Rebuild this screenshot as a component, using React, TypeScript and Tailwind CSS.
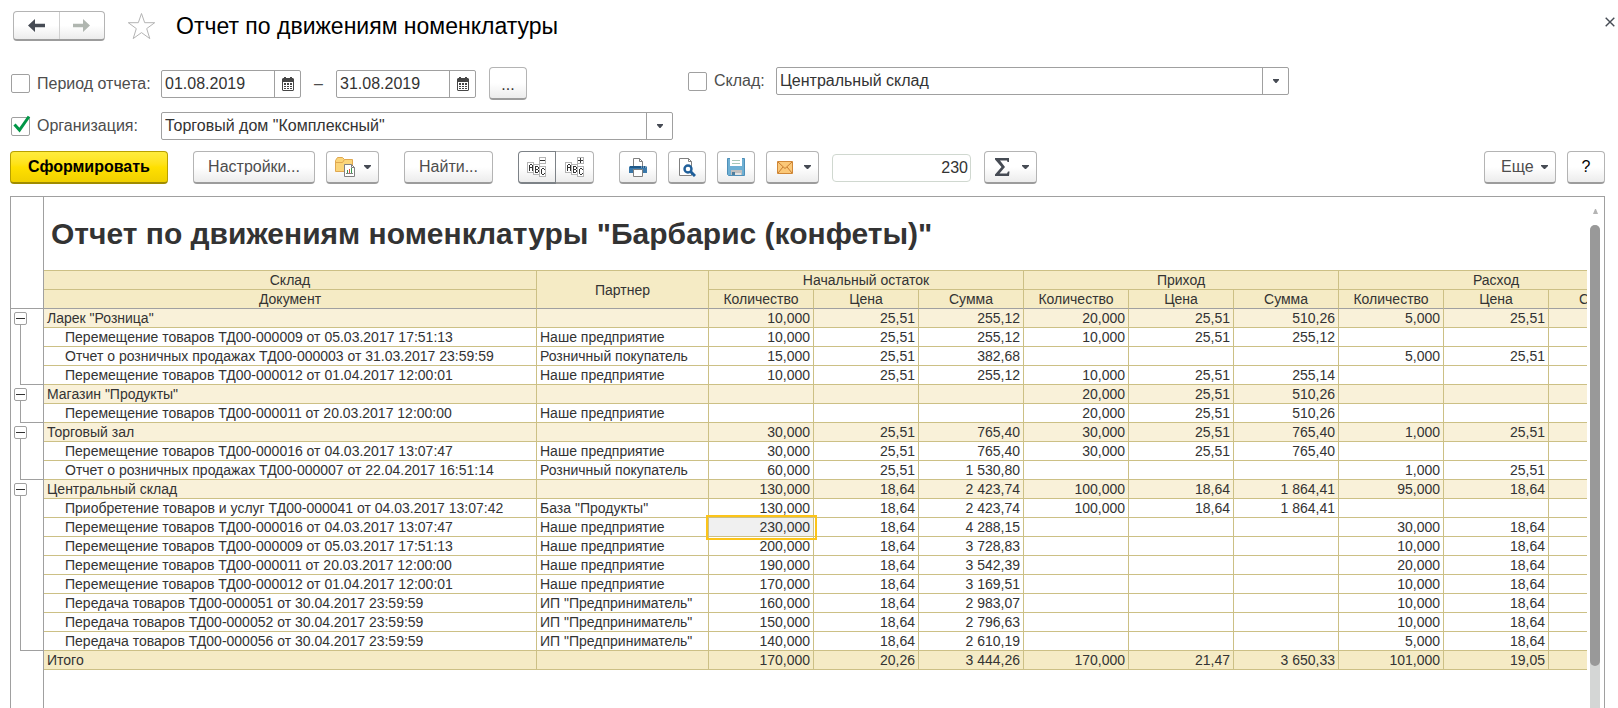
import React from 'react';
import { clsx } from 'clsx';

type Row = {
  name: string;
  partner?: string;
  cells: string[];
};

type Group = Row & { rows: Row[] };

const OUR = 'Наше предприятие';
const RETAIL = 'Розничный покупатель';
const IP = 'ИП "Предприниматель"';

const groups: Group[] = [
  {
    name: 'Ларек "Розница"',
    cells: ['10,000', '25,51', '255,12', '20,000', '25,51', '510,26', '5,000', '25,51', ''],
    rows: [
      { name: 'Перемещение товаров ТД00-000009 от 05.03.2017 17:51:13', partner: OUR, cells: ['10,000', '25,51', '255,12', '10,000', '25,51', '255,12', '', '', ''] },
      { name: 'Отчет о розничных продажах ТД00-000003 от 31.03.2017 23:59:59', partner: RETAIL, cells: ['15,000', '25,51', '382,68', '', '', '', '5,000', '25,51', ''] },
      { name: 'Перемещение товаров ТД00-000012 от 01.04.2017 12:00:01', partner: OUR, cells: ['10,000', '25,51', '255,12', '10,000', '25,51', '255,14', '', '', ''] },
    ],
  },
  {
    name: 'Магазин "Продукты"',
    cells: ['', '', '', '20,000', '25,51', '510,26', '', '', ''],
    rows: [
      { name: 'Перемещение товаров ТД00-000011 от 20.03.2017 12:00:00', partner: OUR, cells: ['', '', '', '20,000', '25,51', '510,26', '', '', ''] },
    ],
  },
  {
    name: 'Торговый зал',
    cells: ['30,000', '25,51', '765,40', '30,000', '25,51', '765,40', '1,000', '25,51', ''],
    rows: [
      { name: 'Перемещение товаров ТД00-000016 от 04.03.2017 13:07:47', partner: OUR, cells: ['30,000', '25,51', '765,40', '30,000', '25,51', '765,40', '', '', ''] },
      { name: 'Отчет о розничных продажах ТД00-000007 от 22.04.2017 16:51:14', partner: RETAIL, cells: ['60,000', '25,51', '1 530,80', '', '', '', '1,000', '25,51', ''] },
    ],
  },
  {
    name: 'Центральный склад',
    cells: ['130,000', '18,64', '2 423,74', '100,000', '18,64', '1 864,41', '95,000', '18,64', ''],
    rows: [
      { name: 'Приобретение товаров и услуг ТД00-000041 от 04.03.2017 13:07:42', partner: 'База "Продукты"', cells: ['130,000', '18,64', '2 423,74', '100,000', '18,64', '1 864,41', '', '', ''] },
      { name: 'Перемещение товаров ТД00-000016 от 04.03.2017 13:07:47', partner: OUR, cells: ['230,000', '18,64', '4 288,15', '', '', '', '30,000', '18,64', ''] },
      { name: 'Перемещение товаров ТД00-000009 от 05.03.2017 17:51:13', partner: OUR, cells: ['200,000', '18,64', '3 728,83', '', '', '', '10,000', '18,64', ''] },
      { name: 'Перемещение товаров ТД00-000011 от 20.03.2017 12:00:00', partner: OUR, cells: ['190,000', '18,64', '3 542,39', '', '', '', '20,000', '18,64', ''] },
      { name: 'Перемещение товаров ТД00-000012 от 01.04.2017 12:00:01', partner: OUR, cells: ['170,000', '18,64', '3 169,51', '', '', '', '10,000', '18,64', ''] },
      { name: 'Передача товаров ТД00-000051 от 30.04.2017 23:59:59', partner: IP, cells: ['160,000', '18,64', '2 983,07', '', '', '', '10,000', '18,64', ''] },
      { name: 'Передача товаров ТД00-000052 от 30.04.2017 23:59:59', partner: IP, cells: ['150,000', '18,64', '2 796,63', '', '', '', '10,000', '18,64', ''] },
      { name: 'Передача товаров ТД00-000056 от 30.04.2017 23:59:59', partner: IP, cells: ['140,000', '18,64', '2 610,19', '', '', '', '5,000', '18,64', ''] },
    ],
  },
];

const total = ['170,000', '20,26', '3 444,26', '170,000', '21,47', '3 650,33', '101,000', '19,05', ''];

const ROW_HEIGHT = 19;
const SELECTED = '230,000';

const Caret = () => (
  <svg width="7" height="4" viewBox="0 0 7 4" className="shrink-0" aria-hidden="true">
    <path d="M0 0h7v1L4 4H3L0 1z" fill="#464b54" />
  </svg>
);

interface ToolButtonProps {
  label?: string;
  className?: string;
  children: React.ReactNode;
}

const ToolButton: React.FC<ToolButtonProps> = ({ label, className, children }) => (
  <button
    type="button"
    aria-label={label}
    className={clsx(
      'flex h-[33px] shrink-0 items-center justify-center rounded border border-b-2 border-[#b4b4b4] border-b-[#9c9c9c] bg-linear-to-b from-white from-50% to-[#ececec]',
      className
    )}
  >
    {children}
  </button>
);

// Button with a drop-down arrow near its right edge
const MenuButton: React.FC<ToolButtonProps> = ({ label, className, children }) => (
  <button
    type="button"
    aria-label={label}
    className={clsx(
      'flex h-[33px] shrink-0 items-center justify-between rounded border border-b-2 border-[#b4b4b4] border-b-[#9c9c9c] bg-linear-to-b from-white from-50% to-[#ececec] pr-[7px]',
      className
    )}
  >
    {children}
    <Caret />
  </button>
);

interface CheckProps {
  id: string;
  label: string;
  checked?: boolean;
  className?: string;
}

const Check: React.FC<CheckProps> = ({ id, label, checked = false, className }) => (
  <div className={clsx('flex shrink-0 items-center gap-[7px]', className)}>
    <span className="relative flex">
      <input
        id={id}
        type="checkbox"
        defaultChecked={checked}
        className="peer size-[19px] appearance-none rounded-xs border border-[#a0a0a0] bg-white"
      />
      <svg
        width="18"
        height="18"
        viewBox="0 0 18 18"
        className="pointer-events-none absolute bottom-[3px] left-[2px] hidden peer-checked:block"
        aria-hidden="true"
      >
        <path d="M1.500 9.500l5 5.500L16 1.500" fill="none" stroke="#009646" strokeWidth="3" />
      </svg>
    </span>
    <label htmlFor={id} className="text-[#4d4d4d]">{label}</label>
  </div>
);

const CalendarIcon = () => (
  <svg width="12" height="14" viewBox="0 0 12 14" aria-hidden="true">
    <path d="M1 1h10l1 1v11l-1 1H1l-1-1V2z" fill="#464646" />
    <path d="M2 0h2v3H2zM8 0h2v3H8z" fill="#464646" />
    <path d="M1 5h10v8H1z" fill="#fff" />
    <path d="M2 6h2v2H2zM5 6h2v2H5zM8 6h2v2H8zM2 9h2v1H2zM5 9h2v1H5zM8 9h2v1H8zM2 11h2v1H2zM5 11h2v1H5zM8 11h2v1H8z" fill="#464646" />
  </svg>
);

const DateField: React.FC<{ label: string; value: string }> = ({ label, value }) => (
  <div className="flex h-7 w-[140px] shrink-0 rounded-xs border border-[#a0a0a0]">
    <input aria-label={label} defaultValue={value} className="w-0 flex-1 px-[3px] text-[#333] outline-none" />
    <button type="button" aria-label={`${label}: календарь`} className="flex w-[26px] items-center justify-center border-l border-[#a0a0a0]">
      <CalendarIcon />
    </button>
  </div>
);

const Combo: React.FC<{ label: string; value: string }> = ({ label, value }) => (
  <div className="flex h-7 w-[513px] rounded-xs border border-[#a0a0a0]">
    <select aria-label={label} className="w-0 flex-1 appearance-none px-[3px] text-[#333] outline-none">
      <option>{value}</option>
    </select>
    <button type="button" aria-label={`${label}: выбрать`} className="flex w-[26px] items-center justify-center border-l border-[#a0a0a0]">
      <svg width="6" height="4" viewBox="0 0 6 4" aria-hidden="true">
        <path d="M0 0h6v1L3.500 4h-1L0 1z" fill="#464b54" />
      </svg>
    </button>
  </div>
);

const FolderIcon = () => (
  <svg width="21" height="20" viewBox="0 0 21 20" aria-hidden="true">
    <path d="M.5 14.500V3.500L2.500.5h5l2 2h8v12z" fill="#fbd57a" stroke="#e0a850" />
    <path d="M1 5.500h6.500l2-3" fill="none" stroke="#e0a850" />
    <path d="M9.500 7.500h7l3 3v9h-10z" fill="#fff" stroke="#808080" />
    <path d="M16.500 7.500v3h3" fill="none" stroke="#808080" />
    <path d="M12.500 16v-3" stroke="#3c9650" />
    <path d="M14.500 16v-4" stroke="#e0503c" />
    <path d="M16.500 16v-5" stroke="#3c9650" />
    <path d="M11 16.500h7" stroke="#808080" />
  </svg>
);

const AbcIcon: React.FC<{ plus?: boolean }> = ({ plus = false }) => (
  <svg width="20" height="20" viewBox="0 0 20 20" shapeRendering="crispEdges" aria-hidden="true">
    <g fill="#fff" stroke="#b4b4b4">
      <path d="M.5 5.500h6v10h-6zM6.500 7.500h6v10h-6zM12.500 9.500h6v10h-6zM12.500.5h6v6h-6z" />
    </g>
    <g fill="#333">
      <path d="M3 7h2v1H3zM2 8h1v6H2zM5 8h1v6H5zM3 10h2v1H3z" />
      <path d="M8 9h3v1H8zM8 10h1v6H8zM11 10h1v2h-1zM9 12h2v1H9zM11 13h1v2h-1zM8 15h3v1H8z" />
      <path d="M15 11h2v1h-2zM14 12h1v5h-1zM17 12h1v1h-1zM17 16h1v1h-1zM15 17h2v1h-2z" />
      <path d={plus ? 'M13 3h5v1h-5zM15 1h1v5h-1z' : 'M13 3h5v1h-5z'} />
    </g>
  </svg>
);

const PrintIcon = () => (
  <svg width="19" height="19" viewBox="0 0 19 19" aria-hidden="true">
    <path d="M4.500 9V.5h6l3 3V9" fill="#fff" stroke="#808080" />
    <path d="M10.500.5v3h3" fill="none" stroke="#808080" />
    <path d="M1 8h16l1 1v6H0V9z" fill="#3a78aa" />
    <path d="M1 8h16v2H1z" fill="#1f5888" />
    <path d="M12 9h1M14 9h1M16 9h1" stroke="#cde" />
    <path d="M4.500 11.500h9v7h-9z" fill="#fff" stroke="#808080" />
  </svg>
);

const PreviewIcon = () => (
  <svg width="18" height="19" viewBox="0 0 18 19" aria-hidden="true">
    <path d="M1.500.5h9l3 3v14h-12z" fill="#fff" stroke="#808080" />
    <path d="M10.500.5v3h3" fill="none" stroke="#808080" />
    <circle cx="10" cy="11" r="3.500" fill="#fff" stroke="#1f5f9a" strokeWidth="2.400" />
    <path d="M12.500 13.500l4.500 4.500" stroke="#1f5f9a" strokeWidth="3" />
  </svg>
);

const SaveIcon = () => (
  <svg width="18" height="18" viewBox="0 0 18 18" aria-hidden="true">
    <path d="M.5.5h17v17h-16l-1-1z" fill="#6eb0d4" stroke="#4f8fb8" />
    <path d="M3 0h12v8H3z" fill="#fff" />
    <path d="M5 2.500h8M5 5.500h8" stroke="#a8c8b8" />
    <path d="M4 12h11v5H4z" fill="#c0c0c0" />
    <path d="M5 14h3v3H5z" fill="#4f7f9f" />
    <path d="M8 15h6v2H8z" fill="#e4e4e4" />
  </svg>
);

const MailIcon = () => (
  <svg width="16" height="13" viewBox="0 0 16 13" aria-hidden="true">
    <path d="M.5.5h15v12H.5z" fill="#fbc878" stroke="#d08838" />
    <path d="M1 1l7 6.500L15 1M1 12l5-6M15 12l-5-6" fill="none" stroke="#c87c30" />
  </svg>
);

const SigmaIcon = () => (
  <svg width="15" height="18" viewBox="0 0 15 18" aria-hidden="true">
    <path d="M0 0h14v4h-1.500L12 2.500H5L10 9l-5.500 6.500H12l1-2h1.500L14 18H0v-1.500L6.500 9 0 1.500z" fill="#464b54" />
  </svg>
);

const Header = () => (
  <header className="flex items-center pt-[11px] pl-[13px]">
    <div className="flex h-[30px] w-[92px] rounded border border-b-2 border-[#b4b4b4] border-b-[#9c9c9c] bg-linear-to-b from-white from-50% to-[#ececec]">
      <button type="button" aria-label="Назад" className="flex flex-1 items-center justify-center border-r border-[#d0d0d0]">
        <svg width="17" height="13" viewBox="0 0 17 13" aria-hidden="true">
          <path d="M0 6.500L7 0v4.800h10v3.400H7V13z" fill="#464b54" />
        </svg>
      </button>
      <button type="button" aria-label="Вперед" className="flex flex-1 items-center justify-center">
        <svg width="17" height="13" viewBox="0 0 17 13" aria-hidden="true">
          <path d="M17 6.500L10 0v4.800H0v3.400h10V13z" fill="#b0b6b0" />
        </svg>
      </button>
    </div>
    <button type="button" aria-label="Добавить в избранное" className="ml-[22px]">
      <svg width="29" height="28" viewBox="0 0 29 28" className="block" aria-hidden="true">
        <path d="M14.500 1.500l3.200 9.200h10L19.700 16.600l3.100 10-8.300-6-8.300 6 3.100-10L1.300 10.700h10z" fill="#fff" stroke="#b4b4b4" />
      </svg>
    </button>
    <h1 className="ml-5 flex-1 text-[23px] leading-7 text-black">Отчет по движениям номенклатуры</h1>
    <button type="button" aria-label="Закрыть" className="self-start p-[3px] pt-[6px]">
      <svg width="10" height="10" viewBox="0 0 10 10" aria-hidden="true">
        <path d="M.7.7l8.600 8.600M9.300.7L.7 9.300" stroke="#464b54" strokeWidth="1.400" />
      </svg>
    </button>
  </header>
);

const Filters = () => (
  <div className="mt-[26px] flex items-start gap-[15px] pl-[11px]">
    <div className="flex w-[662px] shrink-0 flex-col gap-3">
      <div className="flex items-center">
        <Check id="period" label="Период отчета:" className="w-[150px]" />
        <DateField label="Начало периода" value="01.08.2019" />
        <span className="w-[35px] text-center text-[#4d4d4d]">–</span>
        <DateField label="Конец периода" value="31.08.2019" />
        <ToolButton label="Выбрать период" className="ml-[13px] w-[38px] pt-1 text-[#333]">...</ToolButton>
      </div>
      <div className="flex items-center">
        <Check id="org" label="Организация:" checked className="w-[150px]" />
        <Combo label="Организация" value={'Торговый дом "Комплексный"'} />
      </div>
    </div>
    <div className="flex items-center">
      <Check id="store" label="Склад:" className="w-[88px]" />
      <Combo label="Склад" value="Центральный склад" />
    </div>
  </div>
);

const Toolbar = () => (
  <div className="mt-[11px] flex items-center gap-[11px] pr-[13px] pl-[10px] text-[#4d4d4d]">
    <button
      type="button"
      className="h-[33px] w-[158px] rounded border border-b-2 border-[#b8a000] border-b-[#a08c00] bg-linear-to-b from-[#ffec3c] via-[#ffe000] to-[#f0d000] font-bold text-black"
    >
      Сформировать
    </button>
    <ToolButton className="ml-[14px] w-[122px]">Настройки...</ToolButton>
    <MenuButton label="Варианты отчета" className="w-[53px] pl-2">
      <FolderIcon />
    </MenuButton>
    <ToolButton className="ml-[14px] w-[89px]">Найти...</ToolButton>
    <div className="ml-[14px] flex">
      <ToolButton label="Свернуть группы" className="w-[38px] rounded-r-none border-[#7d8287]!">
        <AbcIcon />
      </ToolButton>
      <ToolButton label="Развернуть группы" className="w-[38px] rounded-l-none border-l-0">
        <AbcIcon plus />
      </ToolButton>
    </div>
    <ToolButton label="Печать" className="ml-[14px] w-[38px]"><PrintIcon /></ToolButton>
    <ToolButton label="Предварительный просмотр" className="w-[38px]"><PreviewIcon /></ToolButton>
    <ToolButton label="Сохранить" className="w-[38px]"><SaveIcon /></ToolButton>
    <MenuButton label="Отправить" className="w-[53px] pl-[10px]">
      <MailIcon />
    </MenuButton>
    <input
      aria-label="Сумма выделенных ячеек"
      defaultValue="230"
      className="mx-0.5 h-7 w-[139px] rounded border border-[#d0d8d0] px-[2px] text-right text-[#333] outline-none"
    />
    <MenuButton label="Итоги" className="w-[53px] pl-[10px]">
      <SigmaIcon />
    </MenuButton>
    <MenuButton className="ml-auto w-[72px] pl-4">Еще</MenuButton>
    <ToolButton label="Справка" className="w-[38px] text-black">?</ToolButton>
  </div>
);

// Tree of collapsible groups, each bracket is as tall as its rows
const Outline = () => (
  <div className="flex w-[33px] shrink-0 flex-col border-r border-[#a0a0a0]">
    <div className="h-28 border-b border-[#a0a0a0]" />
    {groups.map((group) => (
      <div key={group.name} className="flex flex-col pt-[3px]" style={{ height: (group.rows.length + 1) * ROW_HEIGHT }}>
        <button
          type="button"
          aria-label={`Свернуть: ${group.name}`}
          className="ml-[3px] flex size-[13px] shrink-0 items-center justify-center rounded-xs border border-[#a0a0a0]"
        >
          <span className="h-px w-[9px] bg-[#333]" />
        </button>
        <div className="ml-[9px] flex-1 border-b border-l border-[#a0a0a0]" />
      </div>
    ))}
  </div>
);

const cell = 'h-[19px] border-r border-b border-[#ccc085] px-[3px] py-0';

const Line: React.FC<{ row: Row; group?: boolean }> = ({ row, group = false }) => (
  <tr className={group ? 'bg-[#f9f1d9]' : undefined}>
    <td className={clsx(cell, !group && 'pl-[21px]')}>{row.name}</td>
    <td className={cell}>{row.partner}</td>
    {row.cells.map((value, i) => (
      <td
        key={i}
        className={clsx(
          cell,
          'text-right',
          value === SELECTED && 'bg-[#f0f0f0] outline-2 outline-offset-1 outline-[#fcc419]'
        )}
      >
        {value}
      </td>
    ))}
  </tr>
);

const ReportTable = () => (
  <table className="w-[1610px] table-fixed border-separate border-spacing-0 text-sm leading-[18px] whitespace-nowrap">
    <colgroup>
      <col className="w-[493px]" />
      <col className="w-[172px]" />
      {total.map((_, i) => (
        <col key={i} className="w-[105px]" />
      ))}
    </colgroup>
    <thead className="bg-[#f5ebc5]">
      <tr>
        <th className={clsx(cell, 'border-t font-normal')}>Склад</th>
        <th rowSpan={2} className={clsx(cell, 'border-t border-b-[#a0a0a0] font-normal')}>Партнер</th>
        {['Начальный остаток', 'Приход', 'Расход'].map((title) => (
          <th key={title} colSpan={3} className={clsx(cell, 'border-t font-normal')}>{title}</th>
        ))}
      </tr>
      <tr>
        <th className={clsx(cell, 'border-b-[#a0a0a0] font-normal')}>Документ</th>
        {total.map((_, i) => (
          <th key={i} className={clsx(cell, 'border-b-[#a0a0a0] font-normal')}>
            {['Количество', 'Цена', 'Сумма'][i % 3]}
          </th>
        ))}
      </tr>
    </thead>
    <tbody>
      {groups.map((group) => (
        <React.Fragment key={group.name}>
          <Line row={group} group />
          {group.rows.map((row) => (
            <Line key={row.name} row={row} />
          ))}
        </React.Fragment>
      ))}
    </tbody>
    <tfoot className="bg-[#f5ebc5]">
      <tr>
        <td className={cell}>Итого</td>
        <td className={cell} />
        {total.map((value, i) => (
          <td key={i} className={clsx(cell, 'text-right')}>{value}</td>
        ))}
      </tr>
    </tfoot>
  </table>
);

const Scrollbar = () => (
  <div className="flex w-[17px] shrink-0 flex-col items-center pt-3 pr-px">
    <svg width="5" height="5" viewBox="0 0 5 5" aria-hidden="true">
      <path d="M2 0h1l2 5H0z" fill="#b4b4b4" />
    </svg>
    <div className="mt-[11px] w-[10px] flex-1 rounded-t-full bg-[#d4d6d5]">
      <div className="h-[441px] rounded-full bg-[#999]" />
    </div>
  </div>
);

export default function App() {
  return (
    <div className="flex min-h-screen flex-col bg-white font-['Liberation_Sans',Arial,sans-serif] text-base text-[#333]">
      <Header />
      <Filters />
      <Toolbar />
      <main className="mt-3 mr-[13px] ml-[10px] flex flex-1 border border-b-0 border-[#a0a0a0]">
        <Outline />
        <div className="w-0 flex-1 overflow-hidden">
          <h2 className="flex h-[73px] items-center pl-[7px] text-3xl font-bold whitespace-nowrap">
            Отчет по движениям номенклатуры "Барбарис (конфеты)"
          </h2>
          <ReportTable />
        </div>
        <Scrollbar />
      </main>
    </div>
  );
}
